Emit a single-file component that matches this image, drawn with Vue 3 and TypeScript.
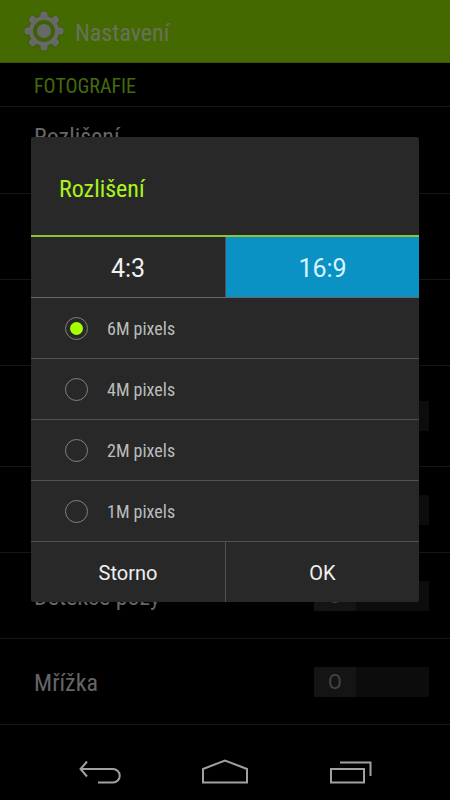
<script setup lang="ts">
import { ref } from 'vue'

interface Setting {
  label: string
  kind: 'choice' | 'switch' | 'none'
  tall?: boolean
  on: boolean
}

const settings = ref<Setting[]>([
  { label: 'Rozlišení', kind: 'choice', on: false },
  { label: '', kind: 'none', on: false },
  { label: '', kind: 'none', on: false },
  { label: '', kind: 'switch', tall: true, on: false },
  { label: '', kind: 'switch', on: false },
  { label: 'Detekce pózy', kind: 'switch', on: false },
  { label: 'Mřížka', kind: 'switch', on: false },
])

const ratios = ['4:3', '16:9']
const ratio = ref('16:9')
const sizes = ['6M pixels', '4M pixels', '2M pixels', '1M pixels']
const size = ref('6M pixels')
const teeth = [0, 45, 90, 135, 180, 225, 270, 315]
</script>

<template>
  <div class="screen">
    <header class="bar">
      <svg class="gear" viewBox="0 0 42 42" aria-hidden="true">
        <g class="gear-edge">
          <circle cx="21" cy="21" r="15" />
          <rect v-for="a in teeth" :key="a" x="17.500" y="1.500" width="7" height="10" rx="2.500" :transform="`rotate(${a} 21 21)`" />
        </g>
        <g class="gear-body">
          <rect v-for="a in teeth" :key="a" x="17.500" y="1.500" width="7" height="10" rx="2.500" :transform="`rotate(${a} 21 21)`" />
          <circle cx="21" cy="21" r="15" />
        </g>
        <circle class="gear-ring" cx="21" cy="21" r="9" />
      </svg>
      <h1>Nastavení</h1>
    </header>

    <main class="list">
      <h2>FOTOGRAFIE</h2>
      <div v-for="(s, i) in settings" :key="i" class="row" :class="{ tall: s.tall, choice: s.kind === 'choice' }">
        <span class="name">{{ s.label }}</span>
        <button v-if="s.kind === 'switch'" type="button" class="switch" role="switch" :aria-checked="s.on" @click="s.on = !s.on">
          <span class="thumb">O</span>
        </button>
      </div>
    </main>

    <nav class="nav">
      <button type="button">
        <svg width="46" height="28" viewBox="0 0 46 28" aria-hidden="true">
          <path d="M10 3.500L3.500 11l6.500 7.500M3.500 11H36a6.700 6.700 0 0 1 0 13.500H21" />
        </svg>
      </button>
      <button type="button">
        <svg width="46" height="28" viewBox="0 0 46 28" aria-hidden="true">
          <path d="M1 24.500V11L23 2.500 45 11v13.500z" />
        </svg>
      </button>
      <button type="button">
        <svg width="46" height="28" viewBox="0 0 46 28" aria-hidden="true">
          <path d="M4 11h33v13.500H4zM13 4.500h30.500V18" />
        </svg>
      </button>
    </nav>

    <div class="overlay">
      <section class="dialog" role="dialog" aria-labelledby="dialog-title">
        <h2 id="dialog-title" class="title">Rozlišení</h2>
        <div class="tabs">
          <button v-for="r in ratios" :key="r" type="button" :class="{ active: ratio === r }" @click="ratio = r">{{ r }}</button>
        </div>
        <label v-for="s in sizes" :key="s" class="option">
          <input v-model="size" type="radio" name="size" :value="s" />
          <span>{{ s }}</span>
        </label>
        <div class="actions">
          <button type="button">Storno</button>
          <button type="button">OK</button>
        </div>
      </section>
    </div>
  </div>
</template>

<style>
body {
  margin: 0;
  background: #000;
}
</style>

<style scoped>
.screen {
  position: relative;
  display: flex;
  flex-direction: column;
  min-height: 100vh;
  overflow: hidden;
  background: #000;
  font-family: "Roboto Condensed", "Liberation Sans Narrow", Roboto, sans-serif;
}

button {
  margin: 0;
  padding: 0;
  border: 0;
  background: none;
  color: inherit;
  font: inherit;
}

h1,
h2 {
  margin: 0;
  font-weight: 400;
}

.bar {
  display: flex;
  align-items: center;
  gap: 10px;
  box-sizing: border-box;
  height: 63px;
  padding: 0 23px;
  border-bottom: 1px solid #3a5212;
  background: #446900;
}

.gear {
  width: 42px;
  height: 42px;
}

.gear-edge {
  fill: #3e5e06;
  stroke: #3e5e06;
  stroke-width: 2;
}

.gear-body {
  fill: #676966;
}

.gear-ring {
  fill: none;
  stroke: #405f08;
  stroke-width: 4;
}

h1 {
  padding-top: 4px;
  color: #69715d;
  font-size: 24px;
  line-height: 32px;
}

.list {
  flex: 1;
}

.list h2 {
  box-sizing: border-box;
  height: 44px;
  padding: 0 34px;
  border-bottom: 1px solid #161616;
  color: #446b0c;
  font-size: 20px;
  line-height: 46px;
}

.row {
  display: flex;
  align-items: center;
  justify-content: space-between;
  box-sizing: border-box;
  height: 86px;
  padding: 0 21px 0 34px;
  border-bottom: 1px solid #161616;
  color: #666;
}

.row.tall {
  height: 101px;
}

.row.choice {
  align-items: flex-start;
  height: 87px;
  padding-top: 14px;
}

.name {
  padding-top: 2px;
  font-size: 24px;
  line-height: 28px;
}

.switch {
  display: flex;
  width: 115px;
  height: 30px;
  background: #0c0c0c;
}

.thumb {
  width: 42px;
  background: #141414;
  color: #444;
  font-family: Roboto, sans-serif;
  font-size: 20px;
  line-height: 30px;
}

.switch[aria-checked="true"] {
  justify-content: flex-end;
}

.nav {
  display: flex;
  justify-content: center;
  gap: 79px;
  height: 56px;
}

.nav svg {
  display: block;
  fill: none;
  stroke: #a0a0a0;
  stroke-width: 2;
}

.overlay {
  position: absolute;
  inset: 0;
  display: flex;
  align-items: center;
  padding: 0 31px 61px;
}

.dialog {
  flex: 1;
  overflow: hidden;
  border-radius: 2px;
  background: #282828;
}

.title {
  padding: 35px 28px 29px;
  border-bottom: 2px solid #8ec432;
  color: #a8f51b;
  font-size: 24px;
  line-height: 34px;
}

.tabs,
.actions {
  display: grid;
  grid-template-columns: 1fr 1fr;
  font-family: Roboto, sans-serif;
}

.tabs {
  border-bottom: 1px solid #686868;
}

.tabs button {
  height: 60px;
  padding-top: 2px;
  color: #f0f0f0;
  font-size: 25px;
}

.tabs .active {
  background: #0a92c4;
  color: #d8f4ff;
}

.tabs button + button,
.actions button + button {
  border-left: 1px solid #505050;
}

.option {
  display: flex;
  align-items: center;
  gap: 19px;
  height: 60px;
  padding: 0 34px;
  border-bottom: 1px solid #505050;
  color: #bcbcbc;
  font-size: 18px;
}

.option input {
  flex: none;
  display: grid;
  place-items: center;
  box-sizing: border-box;
  width: 23px;
  height: 23px;
  margin: 0;
  border: 1px solid #808080;
  border-radius: 50%;
  appearance: none;
}

.option input:checked::before {
  content: "";
  width: 13px;
  height: 13px;
  border-radius: 50%;
  background: #a8ff00;
}

.actions button {
  height: 60px;
  padding-top: 2px;
  color: #f0f0f0;
  font-size: 20px;
}
</style>
